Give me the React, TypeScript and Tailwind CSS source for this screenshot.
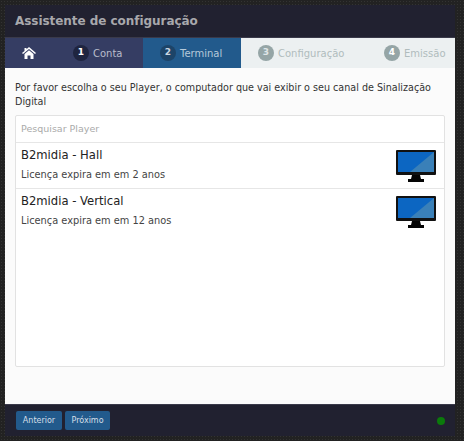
const font = "font-['DejaVu_Sans',sans-serif]"

function Monitor() {
    return (
        <svg width="40" height="33" viewBox="0 0 40 33" className="shrink-0">
            <rect x="0" y="0" width="40" height="25" rx="1" fill="#111" />
            <rect x="2" y="2" width="36" height="20" fill="#0c66c2" />
            <path d="M14 22 L38 2 V22 Z" fill="#3a80b8" />
            <path d="M16 25 H24 L25 29 H28 V32 H12 V29 H15 Z" fill="#050505" />
        </svg>
    )
}

function Step({ n, label, width, badge }: { n: string; label: string; width: string; badge: string }) {
    return (
        <div className={`${width} pl-[17px] flex items-center`}>
            <span className={`${badge} w-4 h-4 rounded-full flex items-center justify-center text-[9px] font-bold`}>{n}</span>
            <span className="ml-1 text-[10px] text-[#b0bcbd]">{label}</span>
        </div>
    )
}

function PlayerRow({ name, note }: { name: string; note: string }) {
    return (
        <div className="h-[46px] border-t border-[#e6e6e6] flex justify-between pl-[5px] pr-[8px]">
            <div>
                <div className="text-[11.6px] leading-4 mt-[4px] text-[#222]">{name}</div>
                <div className="text-[9.8px] leading-4 mt-[4px] text-[#444]">{note}</div>
            </div>
            <div className="pt-[7px]">
                <Monitor />
            </div>
        </div>
    )
}

export default function App() {
    return (
        <div className={`${font} w-[464px] h-[441px] p-[5px] bg-[#222222] bg-[radial-gradient(#333333_1px,transparent_1px)] bg-[length:3px_3px] overflow-hidden`}>
            <div className="w-[450px] h-[431px] flex flex-col">
                {/* Header */}
                <div className="h-[32px] bg-[#212130] flex items-center pl-[10px] shrink-0">
                    <span className="text-[12px] font-bold text-[#a8a8ac] tracking-[-0.05px]">Assistente de configuração</span>
                </div>

                {/* Steps */}
                <div className="h-[31px] flex shrink-0 bg-[#ecf0f1] border-t border-[#3a3a4a]">
                    <div className="w-[138px] bg-[#353d63] flex items-center">
                        <svg width="14" height="12" viewBox="0 0 14 12" className="ml-[17px]">
                            <path d="M7 0 L14 6 L13 7 L7 2 L1 7 L0 6 L2.5 4 V1 H4.5 V2.2 Z M2.5 7 L7 3.2 L11.5 7 V12 H8.5 V8.5 H5.5 V12 H2.5 Z" fill="#fff" />
                        </svg>
                        <span className="ml-[37px] w-4 h-4 rounded-full bg-[#1f2540] text-white flex items-center justify-center text-[9px] font-bold">1</span>
                        <span className="ml-1 text-[10px] text-[#b9bccb]">Conta</span>
                    </div>
                    <div className="w-[98px] bg-[#225a8c] flex items-center pl-[17px]">
                        <span className="w-4 h-4 rounded-full bg-[#1d4468] text-[#c9d6e2] flex items-center justify-center text-[9px] font-bold">2</span>
                        <span className="ml-1 text-[10px] text-[#b6c9da]">Terminal</span>
                    </div>
                    <Step n="3" label="Configuração" width="w-[126px]" badge="bg-[#95a5a6] text-[#dfe5e6]" />
                    <Step n="4" label="Emissão" width="w-[88px]" badge="bg-[#95a5a6] text-white" />
                </div>

                {/* Body */}
                <div className="flex-1 bg-[#fbfbfb] px-[10px] pt-[13px] text-[#333]">
                    <p className="text-[9.6px] leading-[14px]">
                        Por favor escolha o seu Player, o computador que vai exibir o seu canal de Sinalização Digital
                    </p>
                    <div className="mt-[6px] h-[252px] bg-white border border-[#e2e2e2] rounded-[2px]">
                        <div className="h-[26px] flex items-center pl-[5px] text-[9.5px] text-[#aaa]">Pesquisar Player</div>
                        <PlayerRow name="B2midia - Hall" note="Licença expira em em 2 anos" />
                        <PlayerRow name="B2midia - Vertical" note="Licença expira em em 12 anos" />
                    </div>
                </div>

                {/* Footer */}
                <div className="h-[32px] bg-[#212130] border-t border-[#3a3a4a] flex items-center pl-[11px] pr-[10px] gap-[3px] shrink-0">
                    <button className="h-[19px] w-[46px] rounded-[2px] bg-[#225a8c] text-[8px] text-[#d5dfe8]">Anterior</button>
                    <button className="h-[19px] w-[45px] rounded-[2px] bg-[#225a8c] text-[8px] text-[#d5dfe8]">Próximo</button>
                    <span className="ml-auto w-2 h-2 rounded-full bg-[#0b7a0b]" />
                </div>
            </div>
        </div>
    )
}
